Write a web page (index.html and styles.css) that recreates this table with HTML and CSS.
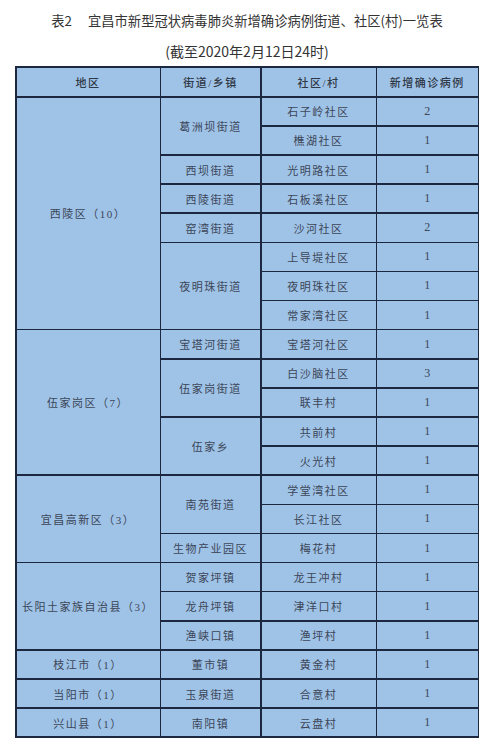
FILE: index.html
```html
<!DOCTYPE html>
<html lang="zh-CN">
<head>
<meta charset="utf-8">
<title>宜昌市新型冠状病毒肺炎新增确诊病例街道、社区(村)一览表</title>
<link rel="stylesheet" href="styles.css">
</head>
<body>
<div class="page">
  <h1 class="title"><span class="tno">表2</span>宜昌市新型冠状病毒肺炎新增确诊病例街道、社区(村)一览表</h1>
  <p class="subtitle">(截至2020年2月12日24时)</p>
  <div class="table">
    <div class="cell head">地区</div>
    <div class="cell head">街道/乡镇</div>
    <div class="cell head">社区/村</div>
    <div class="cell head">新增确诊病例</div>

    <div class="cell r8">西陵区（10）</div>
    <div class="cell r2">葛洲坝街道</div>
    <div class="cell">石子岭社区</div>
    <div class="cell num">2</div>
    <div class="cell">樵湖社区</div>
    <div class="cell num">1</div>
    <div class="cell">西坝街道</div>
    <div class="cell">光明路社区</div>
    <div class="cell num">1</div>
    <div class="cell">西陵街道</div>
    <div class="cell">石板溪社区</div>
    <div class="cell num">1</div>
    <div class="cell">窑湾街道</div>
    <div class="cell">沙河社区</div>
    <div class="cell num">2</div>
    <div class="cell r3">夜明珠街道</div>
    <div class="cell">上导堤社区</div>
    <div class="cell num">1</div>
    <div class="cell">夜明珠社区</div>
    <div class="cell num">1</div>
    <div class="cell">常家湾社区</div>
    <div class="cell num">1</div>

    <div class="cell r5">伍家岗区（7）</div>
    <div class="cell">宝塔河街道</div>
    <div class="cell">宝塔河社区</div>
    <div class="cell num">1</div>
    <div class="cell r2">伍家岗街道</div>
    <div class="cell">白沙脑社区</div>
    <div class="cell num">3</div>
    <div class="cell">联丰村</div>
    <div class="cell num">1</div>
    <div class="cell r2">伍家乡</div>
    <div class="cell">共前村</div>
    <div class="cell num">1</div>
    <div class="cell">火光村</div>
    <div class="cell num">1</div>

    <div class="cell r3">宜昌高新区（3）</div>
    <div class="cell r2">南苑街道</div>
    <div class="cell">学堂湾社区</div>
    <div class="cell num">1</div>
    <div class="cell">长江社区</div>
    <div class="cell num">1</div>
    <div class="cell">生物产业园区</div>
    <div class="cell">梅花村</div>
    <div class="cell num">1</div>

    <div class="cell r3">长阳土家族自治县（3）</div>
    <div class="cell">贺家坪镇</div>
    <div class="cell">龙王冲村</div>
    <div class="cell num">1</div>
    <div class="cell">龙舟坪镇</div>
    <div class="cell">津洋口村</div>
    <div class="cell num">1</div>
    <div class="cell">渔峡口镇</div>
    <div class="cell">渔坪村</div>
    <div class="cell num">1</div>

    <div class="cell">枝江市（1）</div>
    <div class="cell">董市镇</div>
    <div class="cell">黄金村</div>
    <div class="cell num">1</div>

    <div class="cell">当阳市（1）</div>
    <div class="cell">玉泉街道</div>
    <div class="cell">合意村</div>
    <div class="cell num">1</div>

    <div class="cell">兴山县（1）</div>
    <div class="cell">南阳镇</div>
    <div class="cell">云盘村</div>
    <div class="cell num">1</div>
  </div>
</div>
</body>
</html>
```

FILE: styles.css
```css
html, body {
  margin: 0;
  padding: 0;
  background: #ffffff;
}

.page {
  width: 464px;
  margin-left: 15px;
  font-family: "Noto Sans CJK SC", "Noto Sans", sans-serif;
}

.title {
  margin: 11px 0 0;
  font-size: 13.3px;
  line-height: 20px;
  font-weight: 400;
  color: #333333;
  text-align: center;
  white-space: nowrap;
}

.tno {
  margin-right: 16px;
}

.subtitle {
  margin: 10px 0 0;
  font-size: 14px;
  line-height: 20px;
  color: #333333;
  text-align: center;
}

.table {
  margin-top: 5px;
  height: 672px;
  box-sizing: border-box;
  display: grid;
  grid-template-columns: 143px 99px 114px 1fr;
  grid-template-rows: 28.5px repeat(22, 1fr);
  gap: 1.5px;
  padding: 1.5px;
  background: #1c2840;
}

.cell {
  background: #9fc3e7;
  display: flex;
  align-items: center;
  justify-content: center;
  font-family: "Liberation Serif", "Noto Sans CJK SC", serif;
  font-size: 11px;
  letter-spacing: 1.5px;
  color: #3c4658;
  white-space: nowrap;
}

.head {
  font-weight: 500;
  color: #2f3846;
}

.num {
  font-size: 12px;
  letter-spacing: 0;
}

.r2 { grid-row: span 2; }
.r3 { grid-row: span 3; }
.r5 { grid-row: span 5; }
.r8 { grid-row: span 8; }
```
